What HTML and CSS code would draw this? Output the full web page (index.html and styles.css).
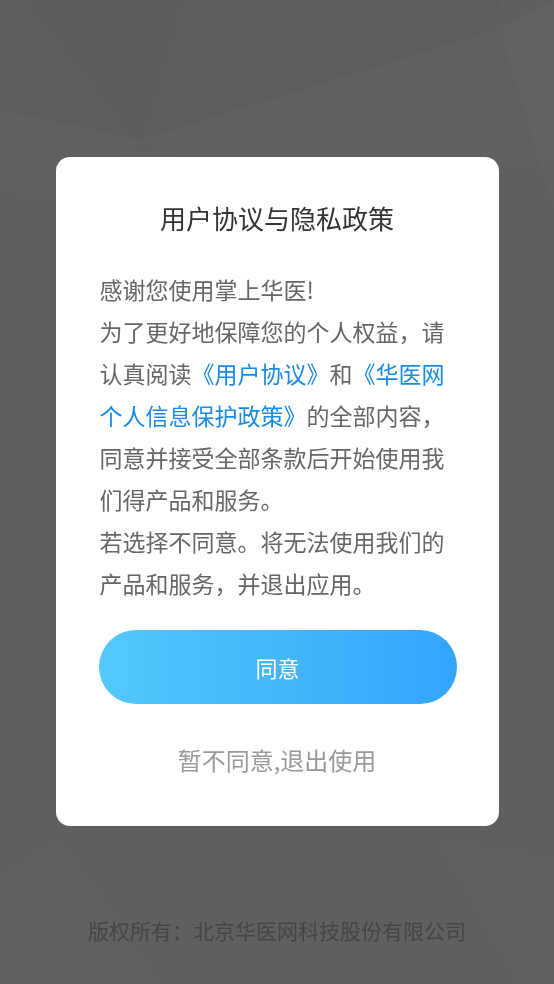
FILE: index.html
```html
<!DOCTYPE html>
<html lang="zh-CN">
<head>
    <meta charset="UTF-8">
    <meta name="viewport" content="width=device-width, initial-scale=1.0, user-scalable=no">
    <title>用户协议与隐私政策</title>
    <link rel="stylesheet" href="styles.css">
</head>
<body>
    <svg class="backdrop" viewBox="0 0 554 984" preserveAspectRatio="none">
        <polygon points="0,0 180,0 140,140 0,110" fill="#000" opacity="0.01"/>
        <polygon points="30,0 500,0 495,30 140,140" fill="#000" opacity="0.015"/>
        <polygon points="140,140 495,30 554,0 554,160 300,200" fill="#fff" opacity="0.008"/>
        <polygon points="0,110 140,140 60,200 0,190" fill="#fff" opacity="0.01"/>
        <polygon points="500,30 554,0 554,210" fill="#fff" opacity="0.015"/>
        <polygon points="60,840 160,984 0,984 0,880" fill="#fff" opacity="0.01"/>
        <polygon points="440,840 520,984 554,984 554,860" fill="#fff" opacity="0.01"/>
    </svg>

    <div class="page">
        <div class="dialog">
            <div class="dialogTitle">用户协议与隐私政策</div>
            <div class="dialogText">
                <p>感谢您使用掌上华医!</p>
                <p>为了更好地保障您的个人权益，请认真阅读<a class="link" href="#">《用户协议》</a>和<a class="link" href="#">《华医网个人信息保护政策》</a>的全部内容，同意并接受全部条款后开始使用我们得产品和服务。</p>
                <p>若选择不同意。将无法使用我们的产品和服务，并退出应用。</p>
            </div>
            <button class="agreeBtn">同意</button>
            <div class="refuse">暂不同意,退出使用</div>
        </div>

        <div class="copyright">版权所有：北京华医网科技股份有限公司</div>
    </div>
</body>
</html>
```

FILE: styles.css
```css
*{
    margin: 0;
    padding: 0;
    box-sizing: border-box;
}
body{
    background: #5f5f5f;
    font-family: "Noto Sans CJK SC", "Noto Sans", sans-serif;
    width: 554px;
    height: 984px;
    overflow: hidden;
}
.backdrop{
    position: fixed;
    left: 0;
    top: 0;
    width: 554px;
    height: 984px;
}
.page{
    position: relative;
    height: 984px;
    display: flex;
    flex-direction: column;
    align-items: center;
    padding-top: 157px;
}
.dialog{
    width: 443px;
    background: #fff;
    border-radius: 14px;
    padding: 43px 44px 46px;
    display: flex;
    flex-direction: column;
}
.dialogTitle{
    font-size: 26px;
    line-height: 36px;
    color: #333;
    text-align: center;
}
.dialogText{
    margin-top: 32px;
    font-size: 23px;
    line-height: 42px;
    color: #666;
}
.link{
    color: #1a8ae5;
    text-decoration: none;
}
.agreeBtn{
    margin-top: 26px;
    width: 358px;
    height: 74px;
    margin-left: -1px;
    border: none;
    border-radius: 37px;
    background: linear-gradient(to right, #55c8fc, #33a4fb);
    color: #fff;
    font-family: inherit;
    font-size: 22px;
}
.refuse{
    margin-top: 36px;
    font-size: 24px;
    line-height: 40px;
    color: #999;
    text-align: center;
}
.copyright{
    margin-top: 89px;
    font-size: 21px;
    line-height: 30px;
    color: #454545;
}
```
